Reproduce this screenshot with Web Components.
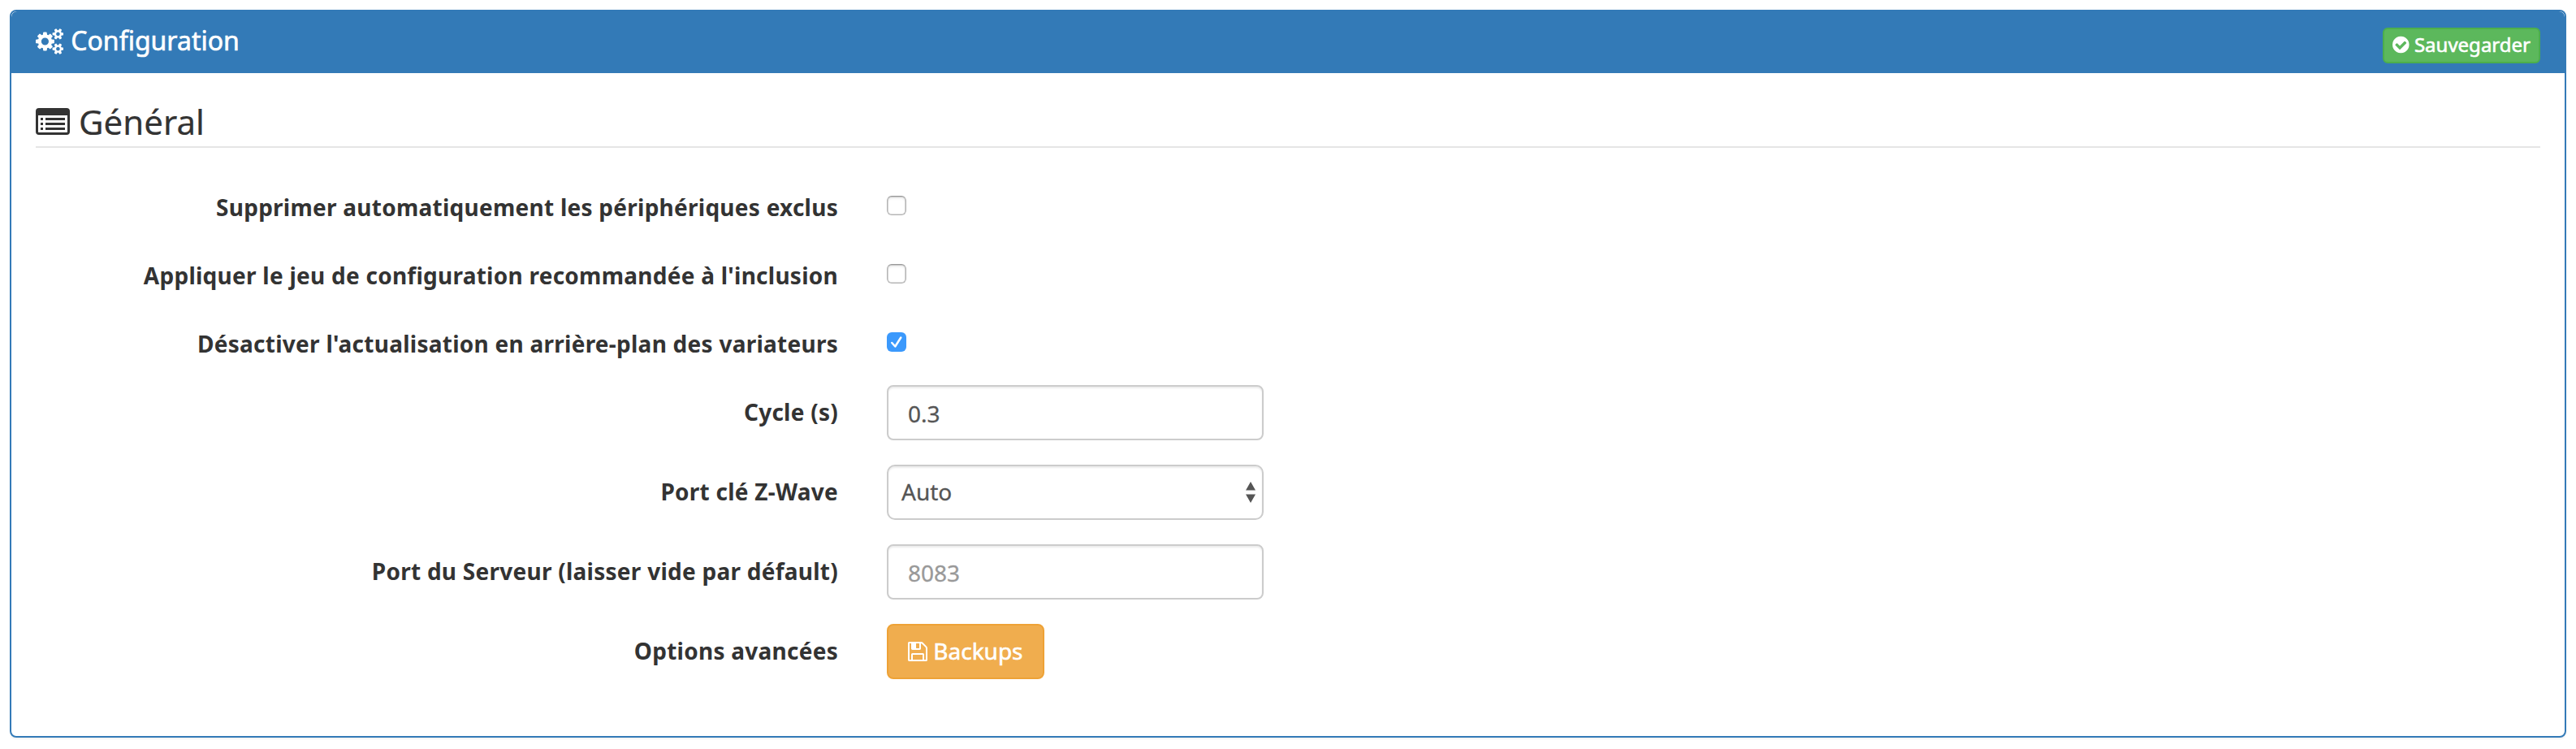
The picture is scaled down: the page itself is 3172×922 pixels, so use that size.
<!DOCTYPE html>
<html lang="fr">
<head>
<meta charset="utf-8">
<title>Configuration</title>
<style>
body { margin: 0; background: #fff; font-family: "Noto Sans", "Open Sans", sans-serif; font-size: 28px; line-height: 40px; color: #333; }
</style>
</head>
<body>
<config-panel>
  <fa-icon slot="title" name="cogs"></fa-icon>
  <span slot="title">Configuration</span>
  <action-button slot="action" kind="success" size="xs" icon="check">Sauvegarder</action-button>
  <section-legend>Général</section-legend>
  <form-row label="Supprimer automatiquement les périphériques exclus"><check-box></check-box></form-row>
  <form-row label="Appliquer le jeu de configuration recommandée à l'inclusion"><check-box></check-box></form-row>
  <form-row label="Désactiver l'actualisation en arrière-plan des variateurs"><check-box checked></check-box></form-row>
  <form-row label="Cycle (s)"><form-field>0.3</form-field></form-row>
  <form-row label="Port clé Z-Wave"><form-field select>Auto</form-field></form-row>
  <form-row label="Port du Serveur (laisser vide par défault)"><form-field placeholder>8083</form-field></form-row>
  <form-row label="Options avancées"><action-button kind="warning" icon="floppy">Backups</action-button></form-row>
</config-panel>
<script>
const ICONS = {
  cogs: ['0 0 1920 1792', '<path d="M896 896q0-106-75-181t-181-75-181 75-75 181 75 181 181 75 181-75 75-181zm768 512q0-52-38-90t-90-38-90 38-38 90q0 53 37.5 90.5t90.5 37.5 90.5-37.5 37.5-90.5zm0-1024q0-52-38-90t-90-38-90 38-38 90q0 53 37.5 90.5t90.5 37.5 90.5-37.5 37.5-90.5zm-384 421v185q0 10-7 19.5t-16 10.5l-155 24q-11 35-32 76 34 48 90 115 7 11 7 20 0 12-7 19-23 30-82.5 89.5t-78.5 59.5q-11 0-21-7l-115-90q-37 19-77 31-11 108-23 155-7 24-30 24h-186q-11 0-20-7.5t-10-17.5l-23-153q-34-10-75-31l-118 89q-7 7-20 7-11 0-21-8-144-133-144-160 0-9 7-19 10-14 41-53t47-61q-23-44-35-82l-152-24q-10-1-17-9.5t-7-19.5v-185q0-10 7-19.5t16-10.5l155-24q11-35 32-76-34-48-90-115-7-11-7-20 0-12 7-20 22-30 82-89t79-59q11 0 21 7l115 90q34-18 77-32 11-108 23-154 7-24 30-24h186q11 0 20 7.5t10 17.5l23 153q34 10 75 31l118-89q8-7 20-7 11 0 21 8 144 133 144 160 0 8-7 19-12 16-42 54t-45 60q23 48 34 82l152 23q10 2 17 10.5t7 19.5zm640 533v140q0 16-149 31-12 27-30 52 51 113 51 138 0 4-4 7-122 71-124 71-8 0-46-47t-52-68q-20 2-30 2t-30-2q-14 21-52 68t-46 47q-2 0-124-71-4-3-4-7 0-25 51-138-18-25-30-52-149-15-149-31v-140q0-16 149-31 13-29 30-52-51-113-51-138 0-4 4-7 4-2 35-20t59-34 30-16q8 0 46 46.5t52 67.5q20-2 30-2t30 2q51-71 92-112l6-2q4 0 124 70 4 3 4 7 0 25-51 138 17 23 30 52 149 15 149 31zm0-1024v140q0 16-149 31-12 27-30 52 51 113 51 138 0 4-4 7-122 71-124 71-8 0-46-47t-52-68q-20 2-30 2t-30-2q-14 21-52 68t-46 47q-2 0-124-71-4-3-4-7 0-25 51-138-18-25-30-52-149-15-149-31v-140q0-16 149-31 13-29 30-52-51-113-51-138 0-4 4-7 4-2 35-20t59-34 30-16q8 0 46 46.5t52 67.5q20-2 30-2t30 2q51-71 92-112l6-2q4 0 124 70 4 3 4 7 0 25-51 138 17 23 30 52 149 15 149 31z"/>'],
  check: ['128 0 1536 1792', '<path d="M1412 734q0-28-18-46l-91-90q-19-19-45-19t-45 19l-408 407-226-226q-19-19-45-19t-45 19l-91 90q-18 18-18 46 0 27 18 45l362 362q19 19 45 19 27 0 46-19l543-543q18-18 18-45zm252 162q0 209-103 385.5t-279.5 279.5-385.5 103-385.5-103-279.5-279.5-103-385.5 103-385.5 279.5-279.5 385.5-103 385.5 103 279.5 279.5 103 385.5z"/>'],
  floppy: ['128 0 1536 1792', '<path d="M512 1536h768v-384h-768v384zm896 0h128v-896q0-14-10-38.5t-20-34.5l-281-281q-10-10-34-20t-39-10v416q0 40-28 68t-68 28h-576q-40 0-68-28t-28-68v-416h-128v1280h128v-416q0-40 28-68t68-28h832q40 0 68 28t28 68v416zm-384-928v-320q0-13-9.5-22.5t-22.5-9.5h-192q-13 0-22.5 9.5t-9.5 22.5v320q0 13 9.5 22.5t22.5 9.5h192q13 0 22.5-9.5t9.5-22.5zm640 32v928q0 40-28 68t-68 28h-1344q-40 0-68-28t-28-68v-1344q0-40 28-68t68-28h928q40 0 88 20t76 48l280 280q28 28 48 76t20 88z"/>'],
  list: ['0 0 42 42', '<path fill-rule="evenodd" d="M4 4h34a4 4 0 0 1 4 4v25a4 4 0 0 1-4 4H4a4 4 0 0 1-4-4V8a4 4 0 0 1 4-4zM3 13v20.200a.8.8 0 0 0 .8.8h34.400a.8.8 0 0 0 .8-.8V13z"/><path d="M6 16h3v3H6zM6 22h3v3H6zM6 28h3v3H6zM12 16h24v3H12zM12 22h24v3H12zM12 28h24v3H12z"/>']
};

class Base extends HTMLElement {
  connectedCallback() {
    if (!this.shadowRoot) this.attachShadow({ mode: 'open' }).innerHTML = this.render();
  }
}

customElements.define('fa-icon', class extends Base {
  render() {
    const [box, body] = ICONS[this.getAttribute('name')];
    const [, , w, h] = box.split(' ').map(Number);
    return `<style>:host{display:block;flex:none;height:1em;width:${w / h}em}svg{display:block;width:100%;height:100%;fill:currentColor}</style>
      <svg viewBox="${box}" aria-hidden="true">${body}</svg>`;
  }
});

customElements.define('action-button', class extends Base {
  render() {
    return `<style>
      :host{display:flex}
      button{display:flex;align-items:center;box-sizing:border-box;margin:0;height:68px;padding:0 24px;border:2px solid #eea236;border-radius:8px;background:#f0ad4e;color:#fff;font:inherit;white-space:nowrap;-webkit-text-stroke:.6px #fff}
      fa-icon{margin-right:7.3px}
      span{padding-bottom:2px}
      :host([kind=success]) button{background:#5cb85c;border-color:#4cae4c}
      :host([size=xs]) button{height:44px;padding:0 10px;border-radius:6px;font-size:24px;line-height:36px}
      :host([size=xs]) fa-icon{margin:0 6.2px 2px 0}
      </style><button type="button"><fa-icon name="${this.getAttribute('icon')}"></fa-icon><span><slot></slot></span></button>`;
  }
});

customElements.define('section-legend', class extends Base {
  render() {
    return `<style>:host{display:flex;align-items:center;height:60px;border-bottom:2px solid #e5e5e5;font-size:42px;line-height:60px;margin-bottom:40px;-webkit-text-stroke:.2px currentColor}
      fa-icon{margin-right:11px}</style><fa-icon name="list"></fa-icon><span><slot></slot></span>`;
  }
});

customElements.define('form-row', class extends Base {
  render() {
    return `<style>
      :host{display:grid;grid-template-columns:988px 464px;column-gap:60px;align-items:start;margin-bottom:30px;min-height:54px}
      label{padding-top:13px;text-align:right;font-weight:700;letter-spacing:.255px;white-space:nowrap}
      </style><label>${this.getAttribute('label')}</label><div><slot></slot></div>`;
  }
});

customElements.define('check-box', class extends Base {
  render() {
    const on = this.hasAttribute('checked');
    return `<style>
      :host{display:block;padding-top:19px}
      div{box-sizing:border-box;width:24px;height:24px;border-radius:6px;border:1.500px solid #b4b4b4;border-top-color:#989898;box-shadow:inset 0 2px 3px rgba(0,0,0,.1),inset 0 0 0 .5px #bbb}
      .on{border:0;background:#3b99fc;box-shadow:none}
      svg{display:block}
      </style><div class="${on ? 'on' : ''}" role="checkbox" aria-checked="${on}">${on ? '<svg width="24" height="24" viewBox="0 0 24 24" fill="none" stroke="#fff" stroke-width="2.500" stroke-linecap="round" stroke-linejoin="round"><path d="M6.300 13l4 4.500 7-11"/></svg>' : ''}</div>`;
  }
});

customElements.define('form-field', class extends Base {
  render() {
    const select = this.hasAttribute('select');
    return `<style>
      :host{display:flex;align-items:center;box-sizing:border-box;height:68px;padding:2px 6px 0 24px;border:2px solid #ccc;border-radius:8px;color:#555;-webkit-text-stroke:.3px currentColor;box-shadow:inset 0 2px 2px rgba(0,0,0,.075)}
      :host([placeholder]){color:#999}
      :host([select]){padding-left:16px;padding-top:0;border-radius:10px}
      span{flex:1}
      :host([select]) span{padding-bottom:2px}
      svg{display:block;margin-right:2.500px}
      </style><span><slot></slot></span>${select ? '<svg width="12" height="26" viewBox="0 0 12 26" fill="#555"><path d="M6 0l6 10.500H0zM0 15.500h12L6 26z"/></svg>' : ''}`;
  }
});

customElements.define('config-panel', class extends Base {
  render() {
    return `<style>
      :host{display:block;box-sizing:border-box;height:896px;margin:12px;border:2px solid #337ab7;border-radius:8px;box-shadow:0 2px 2px rgba(0,0,0,.05)}
      header{display:flex;justify-content:space-between;align-items:flex-start;height:76px;padding:0 30px;background:#337ab7;color:#fff;border-radius:7px 7px 0 0}
      h3{display:flex;align-items:center;gap:9px;margin:0;height:72px;font-size:32px;font-weight:400;-webkit-text-stroke:.6px #fff}
      ::slotted(fa-icon){margin-top:1px}
      .action{display:flex;padding-top:20px}
      main{display:block;padding:30px 30px 0}
      </style>
      <header><h3><slot name="title"></slot></h3><div class="action"><slot name="action"></slot></div></header>
      <main><slot></slot></main>`;
  }
});
</script>
</body>
</html>
